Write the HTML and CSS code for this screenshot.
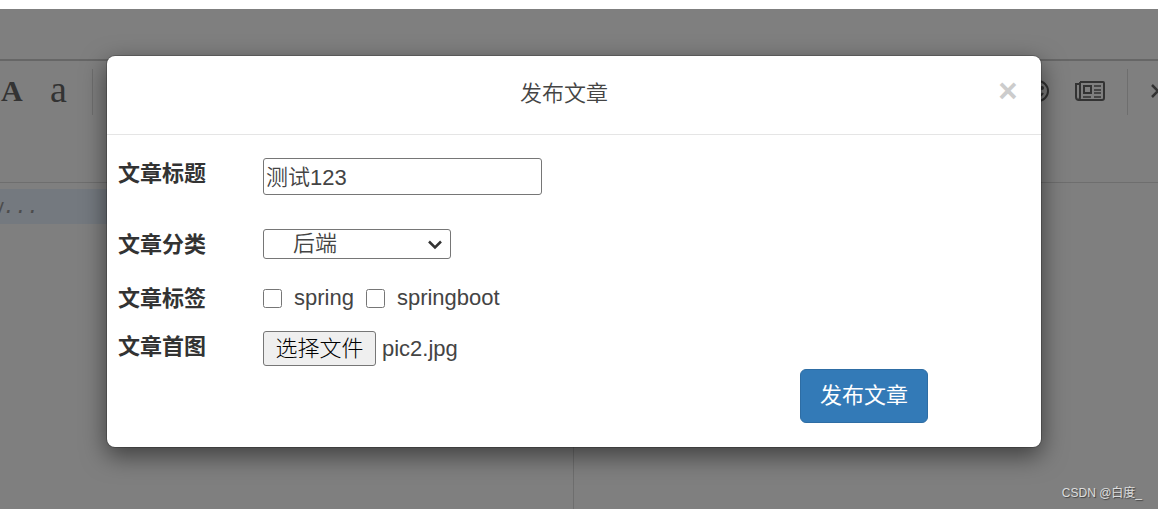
FILE: index.html
```html
<!DOCTYPE html>
<html lang="zh-CN">

<head>
    <meta charset="UTF-8">
    <meta name="viewport" content="width=device-width, initial-scale=1.0">
    <title>发布文章</title>
    <link rel="stylesheet" href="styles.css">
</head>

<body>
    <div class="page">
        <div class="topbar"></div>
        <div class="toolbar">
            <div class="tools">
                <a href="#" class="tool upper">A</a>
                <a href="#" class="tool lower">a</a>
                <span class="divider"></span>
            </div>
            <div class="tools">
                <a href="#" class="tool smile" aria-label="emoji">
                    <svg width="24" height="24" viewBox="0 0 24 24" fill="none" stroke="#666" stroke-width="2">
                        <circle cx="12" cy="12" r="10" />
                        <circle cx="8" cy="9" r="1" fill="#666" />
                        <circle cx="16" cy="9" r="1" fill="#666" />
                        <path d="M7 14c2 4 8 4 10 0" />
                    </svg>
                </a>
                <a href="#" class="tool news" aria-label="news">
                    <svg width="30" height="22" viewBox="0 0 30 22" fill="none" stroke="#666" stroke-width="2">
                        <path d="M5 2h23q1 0 1 1v15q0 2-2 2H4q-3 0-3-3V4h4" />
                        <path d="M5 2v15q0 3-2 3" />
                        <path d="M9 6h7v7H9z" />
                        <path d="M19 6h7M19 10h7M19 13h7M8 17h8M19 17h7" stroke-width="1.5" />
                    </svg>
                </a>
                <span class="divider"></span>
                <a href="#" class="tool terminal" aria-label="code">
                    <svg width="24" height="22" viewBox="0 0 24 22" fill="none" stroke="#666" stroke-width="2.5">
                        <path d="M2 5l6 6-6 6M11 18h11" />
                    </svg>
                </a>
            </div>
        </div>
        <div class="editor">
            <div class="code">
                <p class="line">w...</p>
            </div>
            <div class="preview"></div>
        </div>
    </div>

    <div class="backdrop">
        <div class="modal" role="dialog" aria-labelledby="title">
            <div class="modal-header">
                <h4 id="title">发布文章</h4>
                <button type="button" class="close" aria-label="关闭">×</button>
            </div>
            <form class="modal-body">
                <div class="row title-row">
                    <label for="name">文章标题</label>
                    <input type="text" id="name" value="测试123">
                </div>
                <div class="row type-row">
                    <label for="type">文章分类</label>
                    <div class="select">
                        <select id="type">
                            <option>后端</option>
                        </select>
                        <svg width="16" height="10" viewBox="0 0 16 10" fill="none" stroke="#333" stroke-width="2.5">
                            <path d="M2 1.5l6 6 6-6" />
                        </svg>
                    </div>
                </div>
                <div class="row tag-row">
                    <span class="label">文章标签</span>
                    <div class="tags">
                        <input type="checkbox" id="spring">
                        <label for="spring">spring</label>
                        <input type="checkbox" id="springboot">
                        <label for="springboot">springboot</label>
                    </div>
                </div>
                <div class="row">
                    <span class="label">文章首图</span>
                    <div class="file">
                        <input type="file" id="pic">
                        <label for="pic">选择文件</label>
                        <span>pic2.jpg</span>
                    </div>
                </div>
                <div class="actions">
                    <button type="button" class="submit">发布文章</button>
                </div>
            </form>
        </div>
        <span class="watermark">CSDN @白度_</span>
    </div>
</body>

</html>
```
FILE: styles.css
```css
* {
    margin: 0;
    padding: 0;
    box-sizing: border-box;
}

body {
    font-family: "Liberation Sans", "Noto Sans CJK SC", sans-serif;
    font-size: 22px;
    line-height: 30px;
    color: #444;
    background: #fff;
    overflow: hidden;
}

.page {
    height: 100vh;
    padding-top: 9px;
    display: flex;
    flex-direction: column;
}

.topbar {
    height: 50px;
}

.toolbar {
    height: 124px;
    padding-top: 8px;
    border-top: 2px solid #ccc;
    border-bottom: 1px solid #ddd;
    display: flex;
    justify-content: space-between;
    overflow: hidden;
}

.tools {
    height: 46px;
    display: flex;
    align-items: center;
}

.tool {
    padding-bottom: 2px;
    color: #666;
    text-decoration: none;
    font-family: "Liberation Serif", serif;
}

.tool svg {
    display: block;
}

.upper {
    width: 50px;
    padding-left: 1px;
    font-size: 30px;
    font-weight: bold;
}

.lower {
    width: 42px;
    padding-bottom: 6px;
    font-size: 38px;
}

.divider {
    width: 1px;
    height: 46px;
    background: #ddd;
}

.smile {
    margin-right: 25px;
}

.news {
    margin-right: 22px;
}

.terminal {
    width: 30px;
    padding-left: 22px;
}

.editor {
    flex: 1;
    display: flex;
}

.code {
    flex: 0 1 574px;
    padding-top: 6px;
    border-right: 1px solid #ddd;
    overflow: hidden;
}

.line {
    height: 35px;
    line-height: 38px;
    background: #e8f2ff;
    color: #999;
    font-family: "Liberation Mono", monospace;
    font-size: 20px;
    font-style: italic;
    text-indent: -9px;
}

.preview {
    flex: 1;
}

.backdrop {
    position: absolute;
    top: 9px;
    left: 0;
    right: 0;
    bottom: 0;
    padding: 46px 116px 0 106px;
    background: rgba(0, 0, 0, 0.5);
}

.modal {
    background: #fff;
    background-clip: padding-box;
    border: 1px solid rgba(0, 0, 0, 0.2);
    border-radius: 9px;
    box-shadow: 0 8px 24px rgba(0, 0, 0, 0.5);
}

.modal-header {
    height: 79px;
    padding: 20px 22px 0 24px;
    border-bottom: 1px solid #e5e5e5;
    display: flex;
}

.modal-header h4 {
    flex: 1;
    font-size: 22px;
    font-weight: 350;
    line-height: 36px;
    text-align: center;
}

.close {
    width: 22px;
    height: 30px;
    border: none;
    background: none;
    color: #ccc;
    font: bold 33px/30px "Liberation Sans", sans-serif;
    cursor: pointer;
}

.modal-body {
    padding: 23px 10px 24px 11px;
}

.row {
    display: grid;
    grid-template-columns: 145px 1fr;
    align-items: start;
    justify-items: start;
}

.title-row {
    margin-bottom: 34px;
}

.type-row {
    margin-bottom: 24px;
}

.tag-row {
    margin-bottom: 18px;
}

.row > label,
.label {
    color: #333;
    font-weight: bold;
    line-height: 32px;
    height: 30px;
}

#name {
    width: 279px;
    height: 37px;
    padding: 0 2px 4px;
    border: 1px solid #767676;
    border-radius: 3px;
    color: #444;
    font: inherit;
    font-weight: 350;
}

.select {
    position: relative;
    width: 188px;
    height: 30px;
}

.select select {
    display: block;
    width: 100%;
    height: 30px;
    padding-left: 29px;
    appearance: none;
    border: 1px solid #767676;
    border-radius: 3px;
    background: #fff;
    color: #444;
    font: inherit;
    font-weight: 350;
    line-height: 28px;
}

.select svg {
    position: absolute;
    right: 8px;
    top: 11px;
    pointer-events: none;
}

.tags {
    display: flex;
    align-items: center;
}

.tags input {
    width: 19px;
    height: 19px;
    margin-right: 12px;
}

.tags label {
    margin-right: 12px;
}

.file {
    position: relative;
    display: flex;
    align-items: center;
    gap: 6px;
}

.file input {
    position: absolute;
    width: 1px;
    height: 1px;
    opacity: 0;
}

.file label {
    width: 113px;
    height: 35px;
    border: 1px solid #767676;
    border-radius: 3px;
    background: #efefef;
    color: #000;
    font-weight: 300;
    line-height: 33px;
    text-align: center;
}

.file span {
    line-height: 34px;
}

.actions {
    padding: 3px 103px 0 0;
    text-align: right;
}

.submit {
    display: inline-block;
    height: 54px;
    padding: 0 19px;
    border: 1px solid #2e6da4;
    border-radius: 6px;
    background: #337ab7;
    color: #fff;
    font: inherit;
    vertical-align: top;
    cursor: pointer;
}

.watermark {
    position: absolute;
    right: 16px;
    bottom: 6px;
    font-size: 12px;
    line-height: 20px;
    color: #ddd;
    text-shadow: 1px 1px 1px #444;
}
```
